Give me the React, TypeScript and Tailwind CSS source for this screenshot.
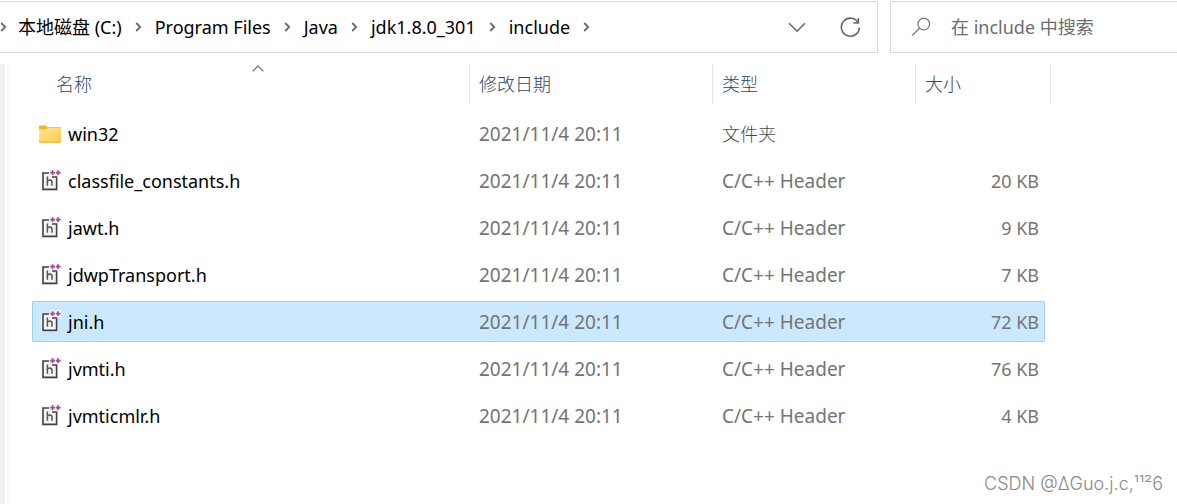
import React from "react";

type Entry = {
  name: string;
  modified: string;
  type: string;
  size?: string;
  folder?: boolean;
  selected?: boolean;
};

const HEADER_TYPE = "C/C++ Header";
const STAMP = "2021/11/4 20:11";

const entries: Entry[] = [
  { name: "win32", modified: STAMP, type: "文件夹", folder: true },
  { name: "classfile_constants.h", modified: STAMP, type: HEADER_TYPE, size: "20 KB" },
  { name: "jawt.h", modified: STAMP, type: HEADER_TYPE, size: "9 KB" },
  { name: "jdwpTransport.h", modified: STAMP, type: HEADER_TYPE, size: "7 KB" },
  { name: "jni.h", modified: STAMP, type: HEADER_TYPE, size: "72 KB", selected: true },
  { name: "jvmti.h", modified: STAMP, type: HEADER_TYPE, size: "76 KB" },
  { name: "jvmticmlr.h", modified: STAMP, type: HEADER_TYPE, size: "4 KB" },
];

const crumbs = ["本地磁盘 (C:)", "Program Files", "Java", "jdk1.8.0_301", "include"];

function Chevron() {
  return (
    <svg aria-hidden="true" width="7" height="10" viewBox="0 0 7 10" fill="none" stroke="#6b6b6b" strokeWidth="1.8" className="shrink-0">
      <path d="M1.2 1 5.2 5 1.2 9" />
    </svg>
  );
}

function FolderIcon() {
  return (
    <svg aria-hidden="true" width="22" height="18" viewBox="0 0 22 18" className="shrink-0">
      <defs>
        <linearGradient id="folder-front" x1="0" y1="0" x2="1" y2="1">
          <stop offset="0" stopColor="#ffe9a0" />
          <stop offset="1" stopColor="#ffca3a" />
        </linearGradient>
      </defs>
      <path d="M0 1.5Q0 .5 1 .5H6.6L8.4 2.3H21Q22 2.3 22 3.3V8H0Z" fill="#f5b417" />
      <path d="M0 4.2H7.2L8.8 3H22V16.5Q22 17.5 21 17.5H1Q0 17.5 0 16.5Z" fill="url(#folder-front)" />
      <path d="M0 16.3V16.5Q0 17.5 1 17.5H21Q22 17.5 22 16.5V16.3Q22 16.7 21 16.7H1Q0 16.7 0 16.3Z" fill="#dfa11c" />
    </svg>
  );
}

function HeaderFileIcon() {
  return (
    <svg aria-hidden="true" width="22" height="24" viewBox="0 0 22 24" fill="none" className="shrink-0">
      <path d="M2 3H11V0H22V7.5H19V22H2Z" fill="#f4f4f4" />
      <path d="M10 4H4V20.4H17.6V8.5" stroke="#424242" strokeWidth="1.6" />
      <path d="M13 8H17.6V8.8" stroke="#424242" strokeWidth="1.5" />
      <path d="M13.6 1.2V6M11.2 3.6H16M19 1.2V6M16.8 3.6H21.6" stroke="#9b4f96" strokeWidth="1.7" />
      <path d="M8.4 7.4V16.8M8.4 12.8Q8.8 10.9 10.7 10.9Q13 10.9 13 13.2V16.8" stroke="#555" strokeWidth="1.5" />
    </svg>
  );
}

function Row({ entry }: { entry: Entry }) {
  const tone = entry.selected ? "bg-[#cce8ff] border-[#99d1ff]" : "border-transparent";
  return (
    <tr aria-selected={entry.selected ? true : undefined} className="h-[41px]">
      <td className={`rounded-l-[2px] border-y border-l p-0 text-black ${tone}`}>
        <div className="flex items-center gap-[7px] pl-[6px]">
          <span className="flex w-[22px] justify-center">{entry.folder ? <FolderIcon /> : <HeaderFileIcon />}</span>
          {entry.name}
        </div>
      </td>
      <td className={`border-y p-0 pl-[9px] text-[19px] ${tone}`}>{entry.modified}</td>
      <td className={`border-y p-0 pl-[9px] ${entry.folder ? "text-lg font-light text-[#4a4a4a]" : "text-[19px]"} ${tone}`}>{entry.type}</td>
      <td className={`rounded-r-[2px] border-y border-r p-0 pr-[5px] text-right ${tone}`}>{entry.size}</td>
    </tr>
  );
}

export default function App() {
  return (
    <div className="relative flex min-h-screen flex-col overflow-hidden bg-white pt-px font-['Noto_Sans','Noto_Sans_CJK_SC',sans-serif] text-lg leading-6 text-[#747474]">
      <div className="flex h-[52px] gap-3">
        <div className="flex min-w-0 flex-1 items-center border-y border-r border-[#d9d9d9] pr-4">
          <nav aria-label="路径" className="flex flex-1 items-center gap-[13px] whitespace-nowrap text-black">
            <span className="-mr-[2px] flex">
              <Chevron />
            </span>
            {crumbs.map((crumb) => (
              <React.Fragment key={crumb}>
                <a href="#">{crumb}</a>
                <Chevron />
              </React.Fragment>
            ))}
          </nav>
          <div className="flex items-center gap-8">
            <button type="button" aria-label="以前的位置">
              <svg width="20" height="20" viewBox="0 0 20 20" fill="none" stroke="#666" strokeWidth="1.5">
                <path d="M2 6.2 10 14.2 18 6.2" />
              </svg>
            </button>
            <button type="button" aria-label="刷新">
              <svg width="22" height="22" viewBox="0 0 22 22" fill="none" stroke="#666" strokeWidth="1.6">
                <path d="M19.4 7A9 9 0 1 0 20.4 11.6" />
                <path d="M19.4 2V7H14.4" />
              </svg>
            </button>
          </div>
        </div>
        <label className="flex w-[287px] items-center gap-5 border-y border-l border-[#d9d9d9] pl-5">
          <svg aria-hidden="true" width="20" height="20" viewBox="0 0 20 20" fill="none" stroke="#777" strokeWidth="1.3" className="shrink-0">
            <circle cx="12.8" cy="7" r="5.8" />
            <path d="M8.6 11.2 1 18.6" />
          </svg>
          <input
            type="text"
            aria-label="搜索"
            placeholder="在 include 中搜索"
            className="w-full min-w-0 bg-transparent outline-none placeholder:text-[#6d6d6d]"
          />
        </label>
      </div>

      <div className="flex flex-1 pt-[11px]">
        <div className="w-[5px] bg-[#f0f0f0]" />
        <div className="ml-[2px] w-[2px] bg-[#f7f7f7]" />
        <div className="-mt-[6px] ml-[23px]">
          <table className="table-fixed border-separate border-spacing-x-0 border-spacing-y-[6px] whitespace-nowrap">
            <colgroup>
              <col className="w-[438px]" />
              <col className="w-[243px]" />
              <col className="w-[203px]" />
              <col className="w-[129px]" />
              <col className="w-[6px]" />
            </colgroup>
            <thead>
              <tr className="h-[43px] text-left align-top text-[#2f4766]">
                <th scope="col" aria-sort="ascending" className="p-0 font-light">
                  <div className="relative ml-[14px] flex h-10 items-center border-r border-[#e5e5e5] pl-[10px]">
                    名称
                    <svg aria-hidden="true" width="12" height="7" viewBox="0 0 12 7" fill="none" stroke="#666" strokeWidth="1.1" className="absolute left-1/2 top-px -translate-x-1/2">
                      <path d="M.6 6.4 6 1 11.4 6.4" />
                    </svg>
                  </div>
                </th>
                <th scope="col" className="p-0 font-light">
                  <div className="flex h-10 items-center border-r border-[#e5e5e5] pl-[9px]">修改日期</div>
                </th>
                <th scope="col" className="p-0 font-light">
                  <div className="flex h-10 items-center border-r border-[#e5e5e5] pl-[9px]">类型</div>
                </th>
                <th scope="col" className="p-0 font-light">
                  <div className="flex h-10 items-center pl-[9px]">大小</div>
                </th>
                <td className="p-0">
                  <div className="h-10 border-r border-[#e5e5e5]" />
                </td>
              </tr>
            </thead>
            <tbody>
              {entries.map((entry) => (
                <Row key={entry.name} entry={entry} />
              ))}
            </tbody>
          </table>
        </div>
      </div>

      <p className="absolute bottom-2 right-[14px] font-['Inter',sans-serif] font-light text-[#8a8a8a]">CSDN @ΔGuo.j.c,¹¹²6</p>
    </div>
  );
}
